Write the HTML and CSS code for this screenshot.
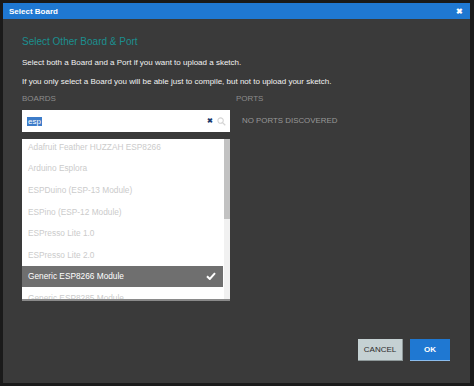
FILE: index.html
```html
<!DOCTYPE html>
<html lang="en">
<head>
  <meta charset="UTF-8">
  <title>Select Board</title>
  <link rel="stylesheet" href="styles.css">
</head>
<body>
<div class="dialog">
  <div class="titlebar">
    <span class="title">Select Board</span>
    <span class="close">&#x2716;</span>
  </div>
  <div class="content">
    <h2 class="heading">Select Other Board &amp; Port</h2>
    <p class="intro">Select both a Board and a Port if you want to upload a sketch.</p>
    <p class="intro">If you only select a Board you will be able just to compile, but not to upload your sketch.</p>
    <div class="columns">
      <div class="boards">
        <div class="label">BOARDS</div>
        <div class="search">
          <span class="query">esp</span>
          <span class="clear">&#x2716;</span>
          <svg class="magnifier" width="9" height="9" viewBox="0 0 10 10">
            <circle cx="4" cy="4" r="3" fill="none" stroke="#d4d4d4" stroke-width="1.2"/>
            <line x1="6.2" y1="6.2" x2="9.2" y2="9.2" stroke="#d4d4d4" stroke-width="1.4"/>
          </svg>
        </div>
        <div class="list">
          <div class="items">
            <div class="item">Adafruit Feather HUZZAH ESP8266</div>
            <div class="item">Arduino Esplora</div>
            <div class="item">ESPDuino (ESP-13 Module)</div>
            <div class="item">ESPino (ESP-12 Module)</div>
            <div class="item">ESPresso Lite 1.0</div>
            <div class="item">ESPresso Lite 2.0</div>
            <div class="item selected">
              <span>Generic ESP8266 Module</span>
              <svg width="10" height="8" viewBox="0 0 10 8">
                <path d="M1 4.2 L3.8 7 L9 1.2" fill="none" stroke="#ffffff" stroke-width="2"/>
              </svg>
            </div>
            <div class="item">Generic ESP8285 Module</div>
          </div>
          <div class="scrollbar"><div class="thumb"></div></div>
        </div>
      </div>
      <div class="ports">
        <div class="label">PORTS</div>
        <div class="empty">NO PORTS DISCOVERED</div>
      </div>
    </div>
  </div>
  <div class="footer">
    <button class="btn cancel">CANCEL</button>
    <button class="btn ok">OK</button>
  </div>
</div>
</body>
</html>
```

FILE: styles.css
```css
* {
    box-sizing: border-box;
}

html, body {
    width: 100%;
    height: 100%;
    margin: 0;
    padding: 0;
}

body {
    background: #1a1a1a;
    font-family: 'Liberation Sans', Arial, sans-serif;
    overflow: hidden;
}

.dialog {
    display: flex;
    flex-direction: column;
    width: 467px;
    height: 380px;
    margin: 3px 0 0 3px;
    background: #3a3a3a;
}

.titlebar {
    display: flex;
    align-items: center;
    justify-content: space-between;
    height: 16px;
    padding: 0 7px 0 6px;
    background: #1f78d2;
    color: #ffffff;
}

.titlebar .title {
    font-size: 8px;
    font-weight: bold;
}

.titlebar .close {
    font-size: 8px;
    font-weight: bold;
}

.content {
    flex: 1;
    padding: 0 19px;
}

.heading {
    margin: 16px 0 0;
    font-size: 10px;
    font-weight: normal;
    line-height: 13px;
    color: #1b8f8f;
}

.intro {
    margin: 10px 0 0;
    font-size: 8px;
    line-height: 10px;
    color: #f2f2f2;
}

.intro + .intro {
    margin-top: 9px;
}

.columns {
    display: grid;
    grid-template-columns: 208px 1fr;
    gap: 6px;
    margin-top: 7px;
}

.label {
    font-size: 8px;
    line-height: 10px;
    color: #8c8c8c;
}

.search {
    display: flex;
    align-items: center;
    height: 22px;
    margin-top: 6px;
    padding: 0 4px 0 5px;
    background: #ffffff;
}

.search .query {
    padding: 0 1px;
    font-size: 8px;
    line-height: 9px;
    background: #3d7cc9;
    color: #ffffff;
}

.search .clear {
    margin-left: auto;
    font-size: 7px;
    font-weight: bold;
    color: #1d3b6e;
}

.search .magnifier {
    margin-left: 4px;
}

.list {
    display: flex;
    height: 162px;
    margin-top: 7px;
    background: #ffffff;
    border-bottom: 2px solid #8a8a8a;
    overflow: hidden;
}

.list .items {
    flex: 1;
    margin-top: -3px;
}

.list .item {
    display: flex;
    align-items: center;
    justify-content: space-between;
    height: 21.6px;
    padding: 0 7px 0 6px;
    font-size: 8.3px;
    color: #cbcbcb;
}

.list .item.selected {
    background: #6f6f6f;
    color: #ffffff;
}

.list .scrollbar {
    width: 7px;
    background: #f1f1f1;
    border-left: 1px solid #ffffff;
}

.list .scrollbar .thumb {
    width: 6px;
    height: 80px;
    background: #c2c2c2;
}

.empty {
    margin-top: 12px;
    padding-left: 6px;
    font-size: 7.9px;
    color: #979797;
}

.footer {
    display: flex;
    justify-content: flex-end;
    gap: 7px;
    padding: 0 20px 22px 0;
}

.btn {
    height: 22px;
    padding: 0;
    border: none;
    font-family: 'Liberation Sans', Arial, sans-serif;
    font-size: 8px;
}

.btn.cancel {
    width: 45px;
    background: #c5d1d3;
    color: #2c2c2c;
    border-right: 1px solid #8e9899;
    border-bottom: 1px solid #8e9899;
}

.btn.ok {
    width: 40px;
    background: #1f78d2;
    color: #ffffff;
    font-weight: bold;
    border-bottom: 1px solid #8bbcec;
}
```
